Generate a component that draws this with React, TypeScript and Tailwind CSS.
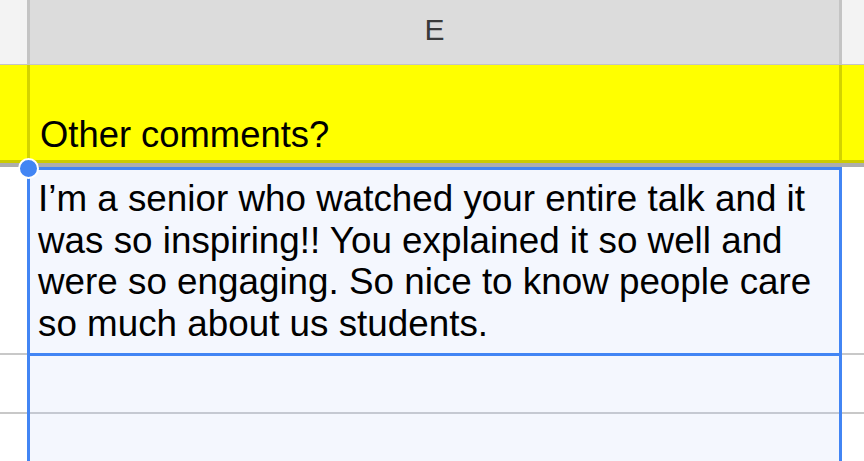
const font = { fontFamily: '"Liberation Sans", Arial, sans-serif' };

const SheetHeader: React.FC = () => (
  <div className="flex h-[64px]">
    <div className="w-[27px] bg-[#f3f3f3]" />
    <div className="w-[3px] bg-[#c4c4c4]" />
    <div className="flex w-[809px] items-center justify-center bg-[#dcdcdc] pb-[4px]">
      <span className="text-[length:30px] leading-[30px] text-[#3a3a3a]">E</span>
    </div>
    <div className="w-[3px] bg-[#c4c4c4]" />
    <div className="flex-1 bg-[#f3f3f3]" />
  </div>
);

const FrozenRow: React.FC = () => (
  <>
    <div className="flex h-[95px] bg-[#ffff00]">
      <div className="w-[27px]" />
      <div className="w-[3px] bg-[#d3d300]" />
      <div className="flex w-[809px] items-end pb-[5px] pl-[10px]">
        <span className="text-[length:36.4px] leading-[40px] text-black">Other comments?</span>
      </div>
      <div className="w-[3px] bg-[#d3d300]" />
      <div className="flex-1" />
    </div>
    <div className="h-[3px] bg-[#cccc00]" />
    <div className="h-[4px] bg-[#adadad]" />
  </>
);

const SideColumn: React.FC<{ className?: string }> = (props) => (
  <div className={`flex flex-col bg-white ${props.className ?? ""}`}>
    <div className="h-[186px]" />
    <div className="h-[2px] bg-[#c8c8c8]" />
    <div className="h-[57px]" />
    <div className="h-[2px] bg-[#c8c8c8]" />
    <div className="flex-1" />
  </div>
);

export default function App() {
  return (
    <div
      className="relative flex h-[461px] w-[864px] flex-col overflow-hidden bg-white"
      style={font}
    >
      <SheetHeader />
      <div className="h-[1px] bg-[#c4c4c4]" />
      <FrozenRow />

      <div className="flex flex-1">
        <SideColumn className="w-[27px]" />
        <div className="flex w-[815px] flex-col bg-[#f4f7fe]">
          <div className="h-[189px] border-[3px] border-[#4285f4] pl-[8px] pr-[4px] pt-[8px]">
            <p className="text-[length:36.8px] leading-[41.7px] text-black">
              I’m a senior who watched your entire talk and it was so inspiring!! You
              explained it so well and were so engaging. So nice to know people care so
              much about us students.
            </p>
          </div>
          <div className="flex flex-1 flex-col border-x-[3px] border-[#4285f4]">
            <div className="h-[56px]" />
            <div className="h-[2px] bg-[#c5c9d2]" />
            <div className="flex-1" />
          </div>
        </div>
        <SideColumn className="flex-1" />
      </div>

      <div className="absolute left-[18px] top-[158px] h-[21px] w-[21px] rounded-full border-2 border-white bg-[#4285f4]" />
    </div>
  );
}
